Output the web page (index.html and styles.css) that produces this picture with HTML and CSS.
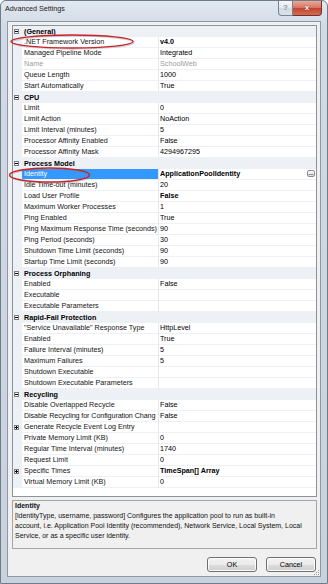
FILE: index.html
```html
<!DOCTYPE html>
<html lang="en">
<head>
    <meta charset="UTF-8">
    <title>Advanced Settings</title>
    <link rel="stylesheet" href="styles.css">
</head>
<body>
    <svg width="0" height="0" class="defs">
        <symbol id="minus" viewBox="0 0 5 5"><rect x=".5" y=".5" width="4" height="4" fill="#fff" stroke="#7a7a7a"/><path d="M1 2.5h3" stroke="#000"/></symbol>
        <symbol id="plus" viewBox="0 0 5 5"><rect x=".5" y=".5" width="4" height="4" fill="#fff" stroke="#7a7a7a"/><path d="M1 2.5h3M2.5 1v3" stroke="#000"/></symbol>
    </svg>

    <div class="window">
        <div class="titlebar">
            <span class="title">Advanced Settings</span>
            <div class="caption">
                <span class="cbtn help">?</span>
                <span class="cbtn close">x</span>
            </div>
        </div>

        <div class="client">
            <div class="grid">
                <div class="row cat"><span class="gutter"><svg class="exp"><use href="#minus"/></svg></span><span class="name">(General)</span></div>
                <div class="row"><span class="gutter"></span><span class="label">.NET Framework Version</span><span class="value b">v4.0</span></div>
                <div class="row"><span class="gutter"></span><span class="label">Managed Pipeline Mode</span><span class="value">Integrated</span></div>
                <div class="row off"><span class="gutter"></span><span class="label">Name</span><span class="value">SchoolWeb</span></div>
                <div class="row"><span class="gutter"></span><span class="label">Queue Length</span><span class="value">1000</span></div>
                <div class="row"><span class="gutter"></span><span class="label">Start Automatically</span><span class="value">True</span></div>

                <div class="row cat"><span class="gutter"><svg class="exp"><use href="#minus"/></svg></span><span class="name">CPU</span></div>
                <div class="row"><span class="gutter"></span><span class="label">Limit</span><span class="value">0</span></div>
                <div class="row"><span class="gutter"></span><span class="label">Limit Action</span><span class="value">NoAction</span></div>
                <div class="row"><span class="gutter"></span><span class="label">Limit Interval (minutes)</span><span class="value">5</span></div>
                <div class="row"><span class="gutter"></span><span class="label">Processor Affinity Enabled</span><span class="value">False</span></div>
                <div class="row"><span class="gutter"></span><span class="label">Processor Affinity Mask</span><span class="value">4294967295</span></div>

                <div class="row cat"><span class="gutter"><svg class="exp"><use href="#minus"/></svg></span><span class="name">Process Model</span></div>
                <div class="row sel"><span class="gutter"></span><span class="label">Identity</span><span class="value b">ApplicationPoolIdentity<span class="dots">...</span></span></div>
                <div class="row"><span class="gutter"></span><span class="label">Idle Time-out (minutes)</span><span class="value">20</span></div>
                <div class="row"><span class="gutter"></span><span class="label">Load User Profile</span><span class="value b">False</span></div>
                <div class="row"><span class="gutter"></span><span class="label">Maximum Worker Processes</span><span class="value">1</span></div>
                <div class="row"><span class="gutter"></span><span class="label">Ping Enabled</span><span class="value">True</span></div>
                <div class="row"><span class="gutter"></span><span class="label">Ping Maximum Response Time (seconds)</span><span class="value">90</span></div>
                <div class="row"><span class="gutter"></span><span class="label">Ping Period (seconds)</span><span class="value">30</span></div>
                <div class="row"><span class="gutter"></span><span class="label">Shutdown Time Limit (seconds)</span><span class="value">90</span></div>
                <div class="row"><span class="gutter"></span><span class="label">Startup Time Limit (seconds)</span><span class="value">90</span></div>

                <div class="row cat"><span class="gutter"><svg class="exp"><use href="#minus"/></svg></span><span class="name">Process Orphaning</span></div>
                <div class="row"><span class="gutter"></span><span class="label">Enabled</span><span class="value">False</span></div>
                <div class="row"><span class="gutter"></span><span class="label">Executable</span><span class="value"></span></div>
                <div class="row"><span class="gutter"></span><span class="label">Executable Parameters</span><span class="value"></span></div>

                <div class="row cat"><span class="gutter"><svg class="exp"><use href="#minus"/></svg></span><span class="name">Rapid-Fail Protection</span></div>
                <div class="row"><span class="gutter"></span><span class="label">"Service Unavailable" Response Type</span><span class="value">HttpLevel</span></div>
                <div class="row"><span class="gutter"></span><span class="label">Enabled</span><span class="value">True</span></div>
                <div class="row"><span class="gutter"></span><span class="label">Failure Interval (minutes)</span><span class="value">5</span></div>
                <div class="row"><span class="gutter"></span><span class="label">Maximum Failures</span><span class="value">5</span></div>
                <div class="row"><span class="gutter"></span><span class="label">Shutdown Executable</span><span class="value"></span></div>
                <div class="row"><span class="gutter"></span><span class="label">Shutdown Executable Parameters</span><span class="value"></span></div>

                <div class="row cat"><span class="gutter"><svg class="exp"><use href="#minus"/></svg></span><span class="name">Recycling</span></div>
                <div class="row"><span class="gutter"></span><span class="label">Disable Overlapped Recycle</span><span class="value">False</span></div>
                <div class="row"><span class="gutter"></span><span class="label clip">Disable Recycling for Configuration Chang</span><span class="value">False</span></div>
                <div class="row"><span class="gutter"><svg class="exp"><use href="#plus"/></svg></span><span class="label">Generate Recycle Event Log Entry</span><span class="value"></span></div>
                <div class="row"><span class="gutter"></span><span class="label">Private Memory Limit (KB)</span><span class="value">0</span></div>
                <div class="row"><span class="gutter"></span><span class="label">Regular Time Interval (minutes)</span><span class="value">1740</span></div>
                <div class="row"><span class="gutter"></span><span class="label">Request Limit</span><span class="value">0</span></div>
                <div class="row"><span class="gutter"><svg class="exp"><use href="#plus"/></svg></span><span class="label">Specific Times</span><span class="value b">TimeSpan[] Array</span></div>
                <div class="row"><span class="gutter"></span><span class="label">Virtual Memory Limit (KB)</span><span class="value">0</span></div>
            </div>

            <div class="desc">
                <div class="desc-title">Identity</div>
                <div>[identityType, username, password] Configures the application pool to run as built-in<br>account, i.e. Application Pool Identity (recommended), Network Service, Local System, Local<br>Service, or as a specific user identity.</div>
            </div>

            <div class="buttons">
                <button class="btn">OK</button>
                <button class="btn">Cancel</button>
            </div>

            <svg class="grip" width="6" height="6" viewBox="0 0 6 6">
                <rect x="4" y="0" width="1" height="1" fill="#a0a0a0"/>
                <rect x="2" y="2" width="1" height="1" fill="#a0a0a0"/>
                <rect x="4" y="2" width="1" height="1" fill="#a0a0a0"/>
                <rect x="0" y="4" width="1" height="1" fill="#a0a0a0"/>
                <rect x="2" y="4" width="1" height="1" fill="#a0a0a0"/>
                <rect x="4" y="4" width="1" height="1" fill="#a0a0a0"/>
            </svg>
        </div>
    </div>

    <!-- red marker rings drawn over the screenshot -->
    <svg class="marks" width="328" height="584">
        <ellipse cx="73" cy="42.5" rx="61" ry="6.5" fill="none" stroke="#888" stroke-opacity=".35" stroke-width="1.5"/>
        <ellipse cx="72" cy="41.5" rx="61" ry="6.5" fill="none" stroke="#c8232b" stroke-width="1.4"/>
        <ellipse cx="50.5" cy="176" rx="40" ry="7" fill="none" stroke="#888" stroke-opacity=".35" stroke-width="1.5"/>
        <ellipse cx="49.5" cy="175" rx="40" ry="7" fill="none" stroke="#c8232b" stroke-width="1.4"/>
    </svg>
</body>
</html>
```

FILE: styles.css
```css
body {
  margin: 0;
  background: #fff;
  font-family: "Liberation Sans", Arial, sans-serif;
  font-size: 7.2px;
  color: #000;
}

.defs {
  position: absolute;
}

/* window frame */
.window {
  width: 328px;
  height: 584px;
  box-sizing: border-box;
  border: 1px solid #6e7b8b;
  border-radius: 6px 6px 0 0;
  background: linear-gradient(#e2e8ef, #d2dbe5 24px, #c9d2dc);
  padding: 0 6px 6px;
  display: flex;
  flex-direction: column;
}

.titlebar {
  display: flex;
  height: 20px;
  margin: 0 -6px;
  padding: 0 5px 0 4px;
}

.title {
  line-height: 16px;
  font-size: 7.2px;
  color: #1c1c1c;
}

.caption {
  display: flex;
  margin-left: auto;
  height: 15px;
}

.cbtn {
  box-sizing: border-box;
  height: 15px;
  line-height: 14px;
  text-align: center;
  font-weight: bold;
  font-size: 8px;
}

.help {
  width: 15px;
  border: 1px solid #75839a;
  border-top: 0;
  border-radius: 0 0 0 4px;
  background: linear-gradient(#f4f6f9, #e3e8ee 50%, #d0d8e1 51%, #dbe2ea);
  color: #8d97a4;
}

.close {
  width: 29px;
  border: 1px solid #7a2d22;
  border-top: 0;
  border-left: 0;
  border-radius: 0 0 4px 0;
  background: linear-gradient(#eaa898, #d7725f 50%, #c2432d 51%, #cf6e55);
  color: #fff;
  text-shadow: 0 0 1px #4a1a12;
}

/* client area */
.client {
  position: relative;
  flex: 1;
  display: flex;
  flex-direction: column;
  border: 1px solid #8d99a8;
  background: #f0f0f0;
  padding: 3px 3px 4px 4px;
}

.grid {
  flex: 1;
  min-height: 0;
  background: #fff;
  border: 1px solid #8c939c;
  overflow: hidden;
}

.row {
  display: flex;
  height: 11px;
  line-height: 10px;
}

.gutter {
  width: 9px;
  flex: none;
  background: #edf0f5;
  display: flex;
  align-items: center;
  padding-left: 1px;
  box-sizing: border-box;
}

.exp {
  width: 5px;
  height: 5px;
  shape-rendering: crispEdges;
}

.cat {
  background: #edf0f5;
  font-weight: bold;
  line-height: 11px;
}

.name {
  padding-left: 2px;
}

.label {
  width: 137px;
  flex: none;
  box-sizing: border-box;
  padding-left: 2px;
  border-right: 1px solid #e6e9ee;
  border-bottom: 1px solid #edf0f5;
  overflow: hidden;
  white-space: nowrap;
  color: #141414;
}

.clip {
  letter-spacing: -0.1px;
}

.value {
  flex: 1;
  display: flex;
  padding-left: 1px;
  border-bottom: 1px solid #edf0f5;
  white-space: nowrap;
  overflow: hidden;
}

.b {
  font-weight: bold;
}

.off .label,
.off .value {
  color: #9c9c9c;
}

.sel .label {
  background: #3399ff;
  color: #fff;
}

.dots {
  margin: 1px 1px 0 auto;
  width: 8px;
  height: 7px;
  line-height: 4px;
  box-sizing: border-box;
  border: 1px solid #8c8c8c;
  border-radius: 2px;
  background: linear-gradient(#fafafa, #dcdcdc);
  text-align: center;
  font-size: 6px;
  color: #333;
}

/* description pane */
.desc {
  height: 49px;
  box-sizing: border-box;
  margin-top: 3px;
  border: 1px solid #a5a5a5;
  padding: 0 2px;
  line-height: 10px;
  white-space: nowrap;
  color: #111;
  font-size: 7px;
}

.desc-title {
  font-weight: bold;
}

.buttons {
  display: flex;
  justify-content: flex-end;
  gap: 9px;
  margin-top: 8px;
  padding-right: 1px;
}

.btn {
  width: 50px;
  height: 15px;
  padding: 0;
  border: 1px solid #707070;
  border-radius: 3px;
  background: linear-gradient(#f3f3f3, #ebebeb 50%, #dddddd 51%, #cfcfcf);
  box-shadow: inset 0 0 0 1px #fbfbfb;
  font-family: "Liberation Sans", Arial, sans-serif;
  font-size: 7.2px;
  color: #000;
}

.grip {
  position: absolute;
  right: 0;
  bottom: 0;
}

.marks {
  position: absolute;
  left: 0;
  top: 0;
  pointer-events: none;
}
```
